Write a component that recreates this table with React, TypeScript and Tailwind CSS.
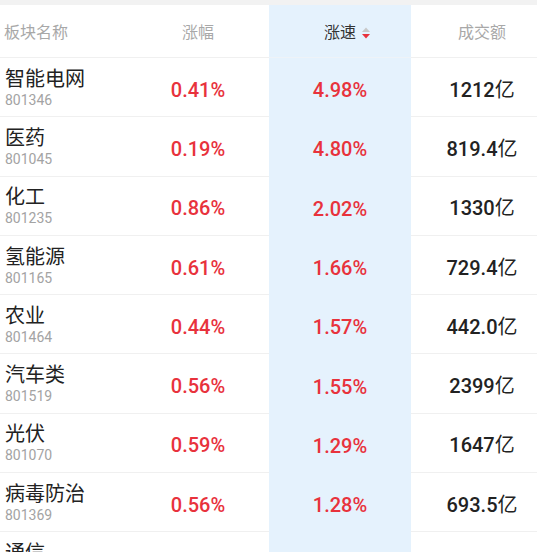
const rows = [
  { name: '智能电网', code: '801346', chg: '0.41%', speed: '4.98%', amount: '1212' },
  { name: '医药', code: '801045', chg: '0.19%', speed: '4.80%', amount: '819.4' },
  { name: '化工', code: '801235', chg: '0.86%', speed: '2.02%', amount: '1330' },
  { name: '氢能源', code: '801165', chg: '0.61%', speed: '1.66%', amount: '729.4' },
  { name: '农业', code: '801464', chg: '0.44%', speed: '1.57%', amount: '442.0' },
  { name: '汽车类', code: '801519', chg: '0.56%', speed: '1.55%', amount: '2399' },
  { name: '光伏', code: '801070', chg: '0.59%', speed: '1.29%', amount: '1647' },
  { name: '病毒防治', code: '801369', chg: '0.56%', speed: '1.28%', amount: '693.5' },
  { name: '通信', code: '801223', chg: '0.52%', speed: '1.20%', amount: '1080' },
];

const font = "font-['Roboto','Noto_Sans_CJK_SC',sans-serif]";

function SortIcon() {
  return (
    <svg width="8" height="12" viewBox="0 0 8 12" className="absolute left-full top-1/2 ml-[6px] -translate-y-1/2">
      <path d="M0 5 L4 0.5 L8 5 Z" fill="#c8c8c8" />
      <path d="M0 7 L4 11.5 L8 7 Z" fill="#e8323c" />
    </svg>
  );
}

export default function App() {
  return (
    <div className={`h-[552px] w-[537px] overflow-hidden bg-white ${font}`}>
      <div className="h-[5px] bg-[#f2f2f2]" />
      <div className="flex w-[553px]">
        {/* name column */}
        <div className="w-[127px] shrink-0">
          <div className="flex h-[53px] items-center border-b border-[#f0f0f0] pl-[4px] pt-[3px] text-[16px] text-[#a8a8a8]">
            板块名称
          </div>
          {rows.map(r => (
            <div key={r.code} className="flex h-[59.3px] flex-col justify-center border-b border-[#f0f0f0] pl-[5px] pt-[1px]">
              <div className="text-[20px] leading-[25px] text-[#222]">{r.name}</div>
              <div className="text-[14px] leading-[17px] text-[#a3a3a3]">{r.code}</div>
            </div>
          ))}
        </div>

        {/* 涨幅 */}
        <div className="w-[142px] shrink-0">
          <div className="flex h-[53px] items-center justify-center border-b border-[#f0f0f0] pt-[3px] text-[16px] text-[#a8a8a8]">
            涨幅
          </div>
          {rows.map(r => (
            <div key={r.code} className="flex h-[59.3px] items-center justify-center border-b border-[#f0f0f0] pt-[5px] text-[20px] font-medium text-[#e8323c]">
              {r.chg}
            </div>
          ))}
        </div>

        {/* 涨速 (sorted) */}
        <div className="w-[142px] shrink-0 bg-[#e5f2fd]">
          <div className="flex h-[53px] items-center justify-center border-b border-[#eef3f8] pt-[3px] text-[16px] text-[#333]">
            <span className="relative">
              涨速
              <SortIcon />
            </span>
          </div>
          {rows.map(r => (
            <div key={r.code} className="flex h-[59.3px] items-center justify-center pt-[5px] text-[20px] font-medium text-[#e8323c]">
              {r.speed}
            </div>
          ))}
        </div>

        {/* 成交额 */}
        <div className="w-[142px] shrink-0">
          <div className="flex h-[53px] items-center justify-center border-b border-[#f0f0f0] pt-[3px] text-[16px] text-[#a8a8a8]">
            成交额
          </div>
          {rows.map(r => (
            <div key={r.code} className="flex h-[59.3px] items-center justify-center border-b border-[#f0f0f0] pt-[5px] text-[20px] font-medium text-[#222]">
              {r.amount}
              <span className="font-normal">亿</span>
            </div>
          ))}
        </div>
      </div>
    </div>
  );
}
